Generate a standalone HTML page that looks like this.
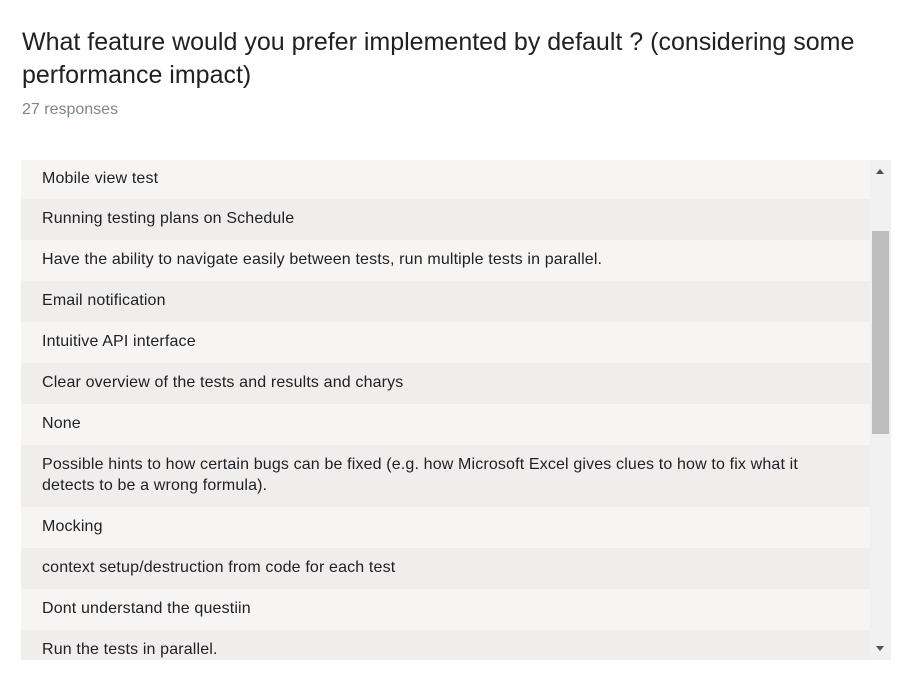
<!DOCTYPE html><html><head><style>
body{margin:0;width:923px;height:693px;background:#fff;font-family:"Liberation Sans",Arial,sans-serif;overflow:hidden;position:relative}
h1{position:absolute;left:22px;top:26px;margin:0;font-weight:400;font-size:25px;line-height:33px;color:#202124;width:880px}
.sub{position:absolute;left:22px;top:101px;font-size:16px;color:#80868b}
.list{position:absolute;left:21px;top:160px;width:849px;height:500px;overflow:hidden}
.r{box-sizing:border-box;padding:9px 60px 0 21px;height:41px;font-size:16px;letter-spacing:0.15px;line-height:21px;color:#202124;background:#f6f5f4}
.r:nth-child(even){background:#f0eded}
.r:first-child{height:39px;padding-top:8px}
.sb{position:absolute;left:870px;top:160px;width:21px;height:500px;background:#f0f0f0}
.th{position:absolute;left:2px;top:71px;width:17px;height:203px;background:#bdbdbd}
.up,.dn{position:absolute;left:6px;width:0;height:0;border-left:4px solid transparent;border-right:4px solid transparent}
.up{top:9px;border-bottom:5px solid #505050}.dn{top:486px;border-top:5px solid #505050}
</style></head><body>
<h1>What feature would you prefer implemented by default ? (considering some performance impact)</h1>
<div class="sub">27 responses</div>
<div class="list">
<div class="r">Mobile view test</div>
<div class="r">Running testing plans on Schedule</div>
<div class="r">Have the ability to navigate easily between tests, run multiple tests in parallel.</div>
<div class="r">Email notification</div>
<div class="r">Intuitive API interface</div>
<div class="r">Clear overview of the tests and results and charys</div>
<div class="r">None</div>
<div class="r" style="height:62px">Possible hints to how certain bugs can be fixed (e.g. how Microsoft Excel gives clues to how to fix what it detects to be a wrong formula).</div>
<div class="r">Mocking</div>
<div class="r">context setup/destruction from code for each test</div>
<div class="r">Dont understand the questiin</div>
<div class="r">Run the tests in parallel.</div>
</div>
<div class="sb"><div class="up"></div><div class="th"></div><div class="dn"></div></div>
</body></html>
